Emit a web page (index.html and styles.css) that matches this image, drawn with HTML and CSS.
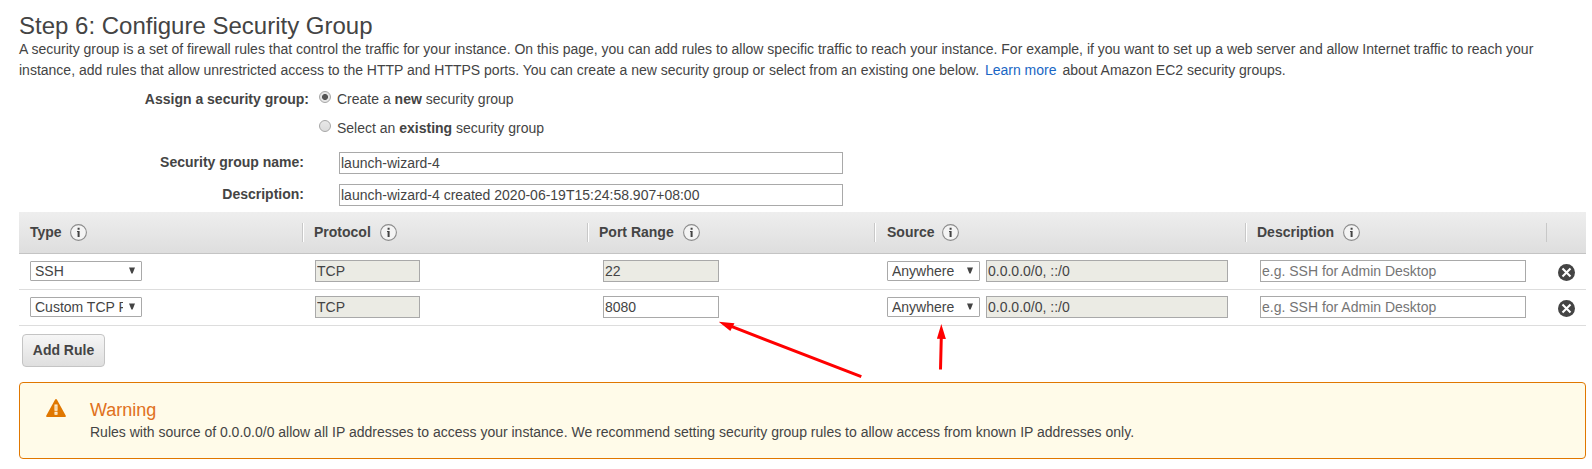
FILE: index.html
```html
<!DOCTYPE html>
<html lang="en">
<head>
<meta charset="utf-8">
<title>Step 6: Configure Security Group</title>
<link rel="stylesheet" href="styles.css">
</head>
<body>
<svg width="0" height="0" class="defs">
  <symbol id="info" viewBox="0 0 17 17"><circle cx="8.5" cy="8.5" r="7.9" fill="#f4f4f4" stroke="#8c8c8c" stroke-width="1.1"/><path d="M7.6 3.8h2v2h-2zM7.6 7h2v6h-2zM7 7h1v1H7z" fill="#444"/></symbol>
  <symbol id="remove" viewBox="0 0 17 17"><circle cx="8.5" cy="8.5" r="8.5" fill="#444"/><path d="M4.5 4.5l8 8M12.5 4.5l-8 8" stroke="#fff" stroke-width="2.1"/></symbol>
  <symbol id="caret" viewBox="0 0 6 7"><path d="M0 .5h6L3.6 6.5H2.4z" fill="#444"/></symbol>
</svg>
<main class="page">
  <h1 class="title">Step 6: Configure Security Group</h1>
  <p class="intro"><span class="line first">A security group is a set of firewall rules that control the traffic for your instance. On this page, you can add rules to allow specific traffic to reach your instance. For example, if you want to set up a web server and allow Internet traffic to reach your</span><span class="line second">instance, add rules that allow unrestricted access to the HTTP and HTTPS ports. You can create a new security group or select from an existing one below. <a class="link">Learn more</a> about Amazon EC2 security groups.</span></p>

  <section class="form">
    <div class="choice"><b class="choice-label">Assign a security group:</b><i class="radio on"></i><span>Create a <b>new</b> security group</span></div>
    <div class="choice"><b class="choice-label"></b><i class="radio"></i><span>Select an <b>existing</b> security group</span></div>
    <div class="field"><b class="field-label">Security group name:</b><input class="input wide" value="launch-wizard-4"></div>
    <div class="field"><b class="field-label">Description:</b><input class="input wide" value="launch-wizard-4 created 2020-06-19T15:24:58.907+08:00"></div>
  </section>

  <section class="rules">
    <div class="row head">
      <div class="th type-head">Type<svg class="info"><use href="#info"/></svg></div>
      <div class="th sep">Protocol<svg class="info"><use href="#info"/></svg></div>
      <div class="th sep">Port Range<svg class="info"><use href="#info"/></svg></div>
      <div class="th sep source-head">Source<svg class="info"><use href="#info"/></svg></div>
      <div class="th sep">Description<svg class="info"><use href="#info"/></svg></div>
      <div class="th sep last"></div>
    </div>
    <div class="row">
      <div class="td type"><div class="select"><span>SSH</span><svg class="caret"><use href="#caret"/></svg></div></div>
      <div class="td protocol"><input class="input off" value="TCP" disabled></div>
      <div class="td port"><input class="input off" value="22" disabled></div>
      <div class="td source"><div class="select"><span>Anywhere</span><svg class="caret"><use href="#caret"/></svg></div><input class="input off" value="0.0.0.0/0, ::/0" disabled></div>
      <div class="td desc"><input class="input" placeholder="e.g. SSH for Admin Desktop"></div>
      <div class="td remove"><svg class="x"><use href="#remove"/></svg></div>
    </div>
    <div class="row">
      <div class="td type"><div class="select"><span>Custom TCP Rule</span><svg class="caret"><use href="#caret"/></svg></div></div>
      <div class="td protocol"><input class="input off" value="TCP" disabled></div>
      <div class="td port"><input class="input" value="8080"></div>
      <div class="td source"><div class="select"><span>Anywhere</span><svg class="caret"><use href="#caret"/></svg></div><input class="input off" value="0.0.0.0/0, ::/0" disabled></div>
      <div class="td desc"><input class="input" placeholder="e.g. SSH for Admin Desktop"></div>
      <div class="td remove"><svg class="x"><use href="#remove"/></svg></div>
    </div>
  </section>

  <button class="add">Add Rule</button>

  <section class="warning">
    <svg class="warn-icon" viewBox="0 0 20 18"><path d="M10 0q.6 0 1 .8l8.8 16q.4 1.200-.8 1.200H1q-1.200 0-.8-1.200L9 .8q.4-.8 1-.8z" fill="#e07700"/><path d="M8.500 5.500h3v6.200h-3zM8.500 12.700h3v3h-3z" fill="#fffbe9"/><path d="M9.500 6.500h1v4.200h-1zM9.500 13.700h1v1h-1z" fill="#f0b56c"/></svg>
    <div>
      <h2 class="warn-title">Warning</h2>
      <p class="warn-text">Rules with source of 0.0.0.0/0 allow all IP addresses to access your instance. We recommend setting security group rules to allow access from known IP addresses only.</p>
    </div>
  </section>
</main>
<svg class="arrows" viewBox="0 0 1592 469">
  <path d="M732 326.700L861.300 376.700M941.300 337L940.500 369.500" stroke="#f00" stroke-width="3"/>
  <path d="M718.700 321.700L734.500 323.200L730.300 331zM941.300 324L945.900 339L936.900 338.800z" fill="#f00"/>
</svg>
</body>
</html>
```

FILE: styles.css
```css
* { box-sizing: border-box; }
body { margin: 0; width: 1592px; height: 469px; overflow: hidden; background: #fff; color: #444; font: 14px/21px "Liberation Sans", Arial, sans-serif; }
.defs { position: absolute; }
.page { padding: 12px 6px 0 19px; }
.title { margin: 0; font-size: 24px; font-weight: 400; line-height: 27px; }
.intro { margin: 0; }
.line { display: block; white-space: nowrap; }
.link { color: #1a66c4; margin: 0 2px; }

.form { height: 131px; padding-top: 8px; }
.choice { display: flex; height: 29px; align-items: flex-start; white-space: nowrap; }
.choice-label { width: 290px; text-align: right; margin-right: 10px; }
.radio { width: 12px; height: 12px; margin: 2px 6px 0 0; border: 1px solid #a6a6a6; border-radius: 50%; background: linear-gradient(#e8e8e8, #dcdcdc); }
.radio.on { background: radial-gradient(circle, #555 0 2.6px, #e6e6e6 3.4px); }
.field { display: flex; height: 32px; padding-top: 5px; }
.field-label { width: 285px; margin-right: 35px; text-align: right; line-height: 20px; }
.input { display: block; height: 22px; width: 100%; margin: 0; padding: 1px; border: 1px solid #a9a9a9; border-radius: 0; background: #fff; color: #444; font: inherit; line-height: 18px; }
.input::placeholder { color: #757575; }
.input.off { background: #ebebe4; }
.input.wide { width: 504px; }

.row { display: grid; grid-template-columns: 283px 285px 287px 371px 301px 1fr; height: 36px; border-bottom: 1px solid #ddd; }
.row.head { height: 42px; padding-top: 11px; border-bottom: 1px solid #c4c4c4; background: linear-gradient(#eee, #dedede); font-weight: 700; }
.th { display: flex; height: 19px; padding-left: 11px; line-height: 19px; }
.th.sep { border-left: 1px solid #c8c8c8; box-shadow: inset 1px 0 #fff; }
.th.last { box-shadow: none; }
.info { width: 17px; height: 17px; margin: 1px 0 0 9px; }
.type-head .info { margin-left: 8px; }
.source-head { padding-left: 12px; }
.source-head .info { margin-left: 8px; }
.td { display: flex; padding-top: 6px; }
.type { padding-left: 11px; }
.protocol { padding: 6px 167px 0 13px; }
.port { padding: 6px 155px 0 16px; }
.source { padding: 6px 17px 0 13px; gap: 6px; }
.desc { padding: 6px 20px 0 15px; }
.remove { padding: 10px 0 0 12px; }
.select { display: flex; flex: none; width: 112px; height: 20px; margin-top: 1px; padding: 0 6px 0 4px; border: 1px solid #a9a9a9; border-radius: 1px; line-height: 18px; justify-content: space-between; }
.source .select { width: 93px; }
.select span { width: 88px; overflow: hidden; white-space: nowrap; }
.source .select span { width: 68px; }
.caret { width: 6px; height: 7px; margin-top: 5px; flex: none; }
.x { width: 17px; height: 17px; }

.add { display: block; width: 83px; height: 33px; margin: 8px 0 15px 3px; padding: 0 0 2px; border: 1px solid #c4c4c4; border-radius: 4px; background: linear-gradient(#f6f6f6, #dfdfdf); color: #444; font: 700 14px/20px "Liberation Sans", Arial, sans-serif; }
.warning { display: flex; height: 77px; padding: 16px 0 0 26px; gap: 24px; border: 1px solid #e07700; border-radius: 4px; background: #fffbe9; }
.warn-icon { width: 20px; height: 18px; }
.warn-title { margin: 0; color: #e07020; font-size: 18px; font-weight: 400; line-height: 22px; }
.warn-text { margin: 1px 0 0; white-space: nowrap; }
.arrows { position: absolute; left: 0; top: 0; width: 1592px; height: 469px; fill: none; pointer-events: none; }
```
